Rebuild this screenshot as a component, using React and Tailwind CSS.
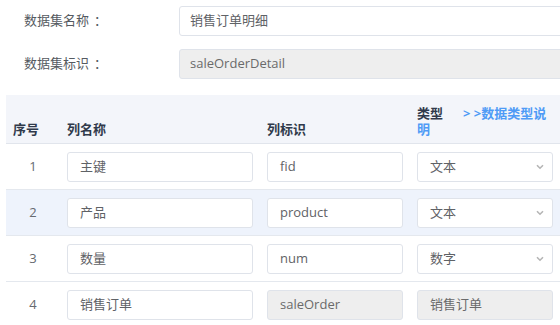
import React from "react";

const font = { fontFamily: '"Open Sans", "Noto Sans CJK SC", sans-serif' };

function Chevron() {
  return (
    <svg width="8" height="6" viewBox="0 0 8 6" className="shrink-0">
      <path d="M1 1.2 L4 4.2 L7 1.2" fill="none" stroke="#b5b5b5" strokeWidth="1.6" />
    </svg>
  );
}

function TextBox({ value, disabled, className = "" }) {
  return (
    <div
      className={`h-[30px] flex items-center rounded-[3px] border border-[#dfe3ea] px-[12px] text-[13px] ${
        disabled ? "bg-[#eeeeee] text-[#6a6a6a]" : "bg-white text-[#5f6266]"
      } ${className}`}
    >
      {value}
    </div>
  );
}

function SelectBox({ value, disabled }) {
  return (
    <div
      className={`h-[30px] flex items-center justify-between rounded-[3px] border border-[#dfe3ea] pl-[12px] pr-[8px] text-[13px] ${
        disabled ? "bg-[#eeeeee] text-[#6a6a6a]" : "bg-white text-[#5f6266]"
      }`}
    >
      <span>{value}</span>
      {!disabled && <Chevron />}
    </div>
  );
}

const rows = [
  { n: 1, name: "主键", id: "fid", type: "文本" },
  { n: 2, name: "产品", id: "product", type: "文本", hl: true },
  { n: 3, name: "数量", id: "num", type: "数字" },
  { n: 4, name: "销售订单", id: "saleOrder", type: "销售订单", disabled: true },
];

export default function App() {
  return (
    <div className="w-[560px] h-[325px] overflow-hidden bg-white" style={font}>
      <div className="w-[620px] pt-[6px]">
        <div className="flex items-center h-[30px]">
          <div className="w-[179px] pl-[24px] text-[13px] text-[#555a61]">
            数据集名称<span className="ml-[5px]">：</span>
          </div>
          <TextBox value="销售订单明细" className="flex-1 !px-[10px]" />
        </div>
        <div className="flex items-center h-[30px] mt-[13px]">
          <div className="w-[179px] pl-[24px] text-[13px] text-[#555a61]">
            数据集标识<span className="ml-[5px]">：</span>
          </div>
          <TextBox value="saleOrderDetail" disabled className="flex-1 !px-[10px]" />
        </div>
      </div>

      <table className="ml-[6px] mt-[16px] w-[554px] border-collapse table-fixed">
        <colgroup>
          <col className="w-[54px]" />
          <col className="w-[200px]" />
          <col className="w-[150px]" />
          <col className="w-[150px]" />
        </colgroup>
        <thead>
          <tr className="bg-[#f3f5fa] border-b border-[#e1e5ec] h-[48px]">
            <th className="align-bottom text-left pl-[7px] pb-[6px] text-[13px] leading-[16px] font-bold text-[#303a4b]">序号</th>
            <th className="align-bottom text-left pl-[7px] pb-[6px] text-[13px] leading-[16px] font-bold text-[#303a4b]">列名称</th>
            <th className="align-bottom text-left pl-[7px] pb-[6px] text-[13px] leading-[16px] font-bold text-[#303a4b]">列标识</th>
            <th className="align-bottom text-left pl-[7px] pr-[7px] pb-[6px] text-[13px] leading-[16px] font-bold text-[#303a4b]">
              类型<span className="ml-[20px] text-[#4f9bf6]">&gt; &gt;数据类型说明</span>
            </th>
          </tr>
        </thead>
        <tbody>
          {rows.map((r) => (
            <tr key={r.n} className={`border-b border-[#e4e8ee] ${r.hl ? "bg-[#eef3fc]" : "bg-white"}`}>
              <td className="pt-[8px] pb-[7px] text-center text-[13px] text-[#666a70]">{r.n}</td>
              <td className="pt-[8px] pb-[7px] px-[7px]">
                <TextBox value={r.name} />
              </td>
              <td className="pt-[8px] pb-[7px] px-[7px]">
                <TextBox value={r.id} disabled={r.disabled} />
              </td>
              <td className="pt-[8px] pb-[7px] px-[7px]">
                <SelectBox value={r.type} disabled={r.disabled} />
              </td>
            </tr>
          ))}
        </tbody>
      </table>
    </div>
  );
}
